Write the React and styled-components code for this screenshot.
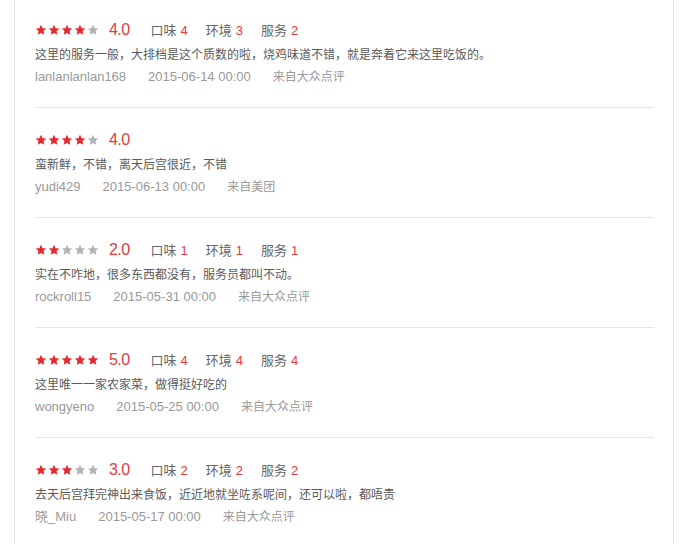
import React from "react";
import styled, { createGlobalStyle } from "styled-components";

const Global = createGlobalStyle`
  html, body { margin: 0; padding: 0; background: #fff; }
  body { font-family: "Noto Sans CJK SC", "Liberation Sans", sans-serif; }
`;

const Card = styled.div`
  margin: -2px 0 0 14px;
  width: 660px;
  box-sizing: border-box;
  border-left: 1px solid #e6e6e6;
  border-right: 1px solid #e6e6e6;
  padding: 0 19px 0 20px;
  background: #fff;
`;

const Item = styled.div`
  padding: 22px 0 20px;
  border-bottom: 1px solid #e5e5e5;
`;

const RatingRow = styled.div`
  display: flex;
  align-items: center;
  height: 20px;
`;

const Stars = styled.div`
  display: flex;
  gap: 1px;
`;

const Score = styled.span`
  margin-left: 10px;
  font-family: "Liberation Sans", "Noto Sans CJK SC", sans-serif;
  font-size: 16px;
  letter-spacing: -0.6px;
  color: #e4393c;
  line-height: 20px;
  margin-right: 21px;
`;

const Sub = styled.span`
  display: inline-flex;
  align-items: baseline;
  gap: 4px;
  margin-right: 18px;
  font-size: 13px;
  color: #666;
  line-height: 20px;
`;

const SubNum = styled.span`
  font-family: "Liberation Sans", sans-serif;
  color: #e4393c;
  font-size: 13px;
`;

const Content = styled.p`
  margin: 3px 0 0;
  height: 22px;
  font-size: 12px;
  line-height: 22px;
  color: #5a5a5a;
`;

const Meta = styled.div`
  display: flex;
  gap: 22px;
  align-items: baseline;
  height: 22px;
  line-height: 22px;
  color: #999;
`;

const Latin = styled.span`
  font-family: "Liberation Sans", "Noto Sans CJK SC", sans-serif;
  font-size: 13px;
`;

const Source = styled.span`
  font-size: 12px;
`;

const Star = ({ on }) => (
  <svg width="12" height="12" viewBox="0 0 24 24">
    <path
      d="M12 1.5l3.2 6.9 7.3.8-5.4 5 1.5 7.3L12 17.8l-6.6 3.7 1.5-7.3-5.4-5 7.3-.8z"
      fill={on ? "#e52b2f" : "#b3b3b3"}
    />
  </svg>
);

const reviews = [
  { stars: 4, score: "4.0", sub: [4, 3, 2], text: "这里的服务一般，大排档是这个质数的啦，烧鸡味道不错，就是奔着它来这里吃饭的。", user: "lanlanlanlan168", date: "2015-06-14 00:00", src: "来自大众点评" },
  { stars: 4, score: "4.0", sub: null, text: "蛮新鲜，不错，离天后宫很近，不错", user: "yudi429", date: "2015-06-13 00:00", src: "来自美团" },
  { stars: 2, score: "2.0", sub: [1, 1, 1], text: "实在不咋地，很多东西都没有，服务员都叫不动。", user: "rockroll15", date: "2015-05-31 00:00", src: "来自大众点评" },
  { stars: 5, score: "5.0", sub: [4, 4, 4], text: "这里唯一一家农家菜，做得挺好吃的", user: "wongyeno", date: "2015-05-25 00:00", src: "来自大众点评" },
  { stars: 3, score: "3.0", sub: [2, 2, 2], text: "去天后宫拜完神出来食饭，近近地就坐咗系呢间，还可以啦，都唔贵", user: "晓_Miu", date: "2015-05-17 00:00", src: "来自大众点评" },
];

const labels = ["口味", "环境", "服务"];

export default function App() {
  return (
    <>
      <Global />
      <Card>
        {reviews.map((r, i) => (
          <Item key={i}>
            <RatingRow>
              <Stars>
                {[0, 1, 2, 3, 4].map((k) => (
                  <Star key={k} on={k < r.stars} />
                ))}
              </Stars>
              <Score>{r.score}</Score>
              {r.sub &&
                r.sub.map((n, k) => (
                  <Sub key={k}>
                    {labels[k]}
                    <SubNum>{n}</SubNum>
                  </Sub>
                ))}
            </RatingRow>
            <Content>{r.text}</Content>
            <Meta>
              <Latin>{r.user}</Latin>
              <Latin>{r.date}</Latin>
              <Source>{r.src}</Source>
            </Meta>
          </Item>
        ))}
      </Card>
    </>
  );
}
